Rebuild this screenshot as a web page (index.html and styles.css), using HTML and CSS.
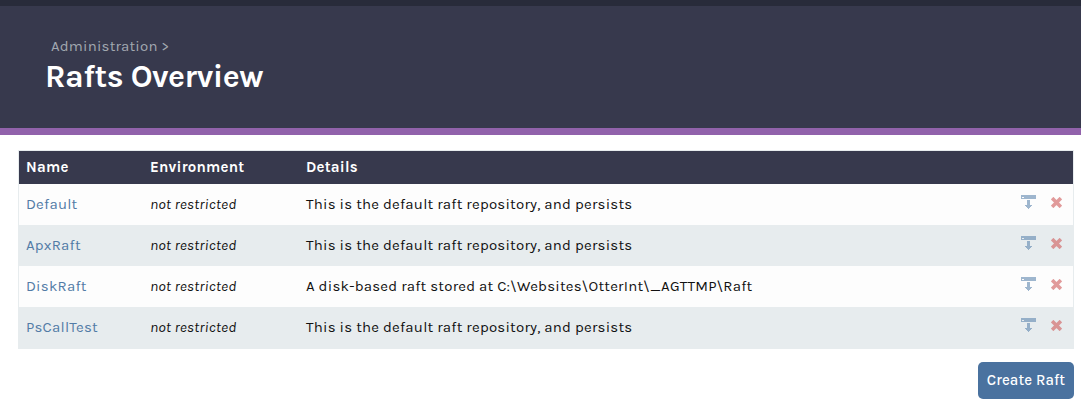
FILE: index.html
```html
<!DOCTYPE html>
<html lang="en">
<head>
<meta charset="utf-8">
<title>Rafts Overview</title>
<link rel="stylesheet" href="styles.css">
</head>
<body>
<svg class="symbols" aria-hidden="true">
  <symbol id="download" viewBox="0 0 15 14"><path fill="#6088af" fill-rule="evenodd" d="M0 0h15v4H0z M1 2v1h2V2z M6 5h3v5h2v1h-1v1H9v1H8v1H7v-1H6v-1H5v-1H4v-1h2z"/></symbol>
  <symbol id="remove" viewBox="0 0 11 11"><path stroke="#d05a5a" stroke-width="3.6" d="M1.1 1.1l8.8 8.8M9.9 1.1l-8.8 8.8"/></symbol>
</svg>
<header class="banner">
  <a class="crumb">Administration &gt;</a>
  <h1 class="title">Rafts Overview</h1>
</header>
<main class="content">
  <table class="rafts">
    <thead><tr><th class="name">Name</th><th class="env">Environment</th><th class="details">Details</th><th class="actions"></th></tr></thead>
    <tbody>
      <tr><td><a class="link">Default</a></td><td><i>not restricted</i></td><td>This is the default raft repository, and persists</td><td><div class="icons"><svg class="download"><use href="#download"/></svg><svg class="remove"><use href="#remove"/></svg></div></td></tr>
      <tr><td><a class="link">ApxRaft</a></td><td><i>not restricted</i></td><td>This is the default raft repository, and persists</td><td><div class="icons"><svg class="download"><use href="#download"/></svg><svg class="remove"><use href="#remove"/></svg></div></td></tr>
      <tr><td><a class="link">DiskRaft</a></td><td><i>not restricted</i></td><td>A disk-based raft stored at C:\Websites\OtterInt\_AGTTMP\Raft</td><td><div class="icons"><svg class="download"><use href="#download"/></svg><svg class="remove"><use href="#remove"/></svg></div></td></tr>
      <tr><td><a class="link">PsCallTest</a></td><td><i>not restricted</i></td><td>This is the default raft repository, and persists</td><td><div class="icons"><svg class="download"><use href="#download"/></svg><svg class="remove"><use href="#remove"/></svg></div></td></tr>
    </tbody>
  </table>
  <button class="create">Create Raft</button>
</main>
</body>
</html>
```
FILE: styles.css
```css
* { box-sizing: border-box; }
body { margin: 0; background: #fff; font-family: Karla, Roboto, sans-serif; font-size: 15px; color: #111; letter-spacing: 0.22px; }
.symbols { display: none; }
.banner { height: 135px; padding: 30px 45px 0; background: #37394d; border-top: 6px solid #282b3a; border-bottom: 7px solid #9162ab; }
.crumb { display: block; padding-left: 6px; line-height: 20px; color: #a2a8b0; letter-spacing: 0.18px; }
.title { margin: 2px 0 0; font-size: 32px; line-height: 38px; font-weight: 700; color: #fff; letter-spacing: -0.5px; white-space: nowrap; }
.content { display: flex; flex-direction: column; align-items: flex-end; padding: 15px 7px 0 18px; }
.rafts { width: 1056px; table-layout: fixed; border: 1px solid #e7ecee; border-collapse: separate; border-spacing: 0; }
th { height: 33px; padding: 0 0 1px 7px; background: #37394d; color: #fff; font-weight: 700; text-align: left; }
td { height: 41px; padding: 0 0 1px 7px; background: #fdfdfd; white-space: nowrap; }
tbody tr:nth-child(even) td { background: #e7ecee; }
.name { width: 124px; }
.env { width: 156px; }
.actions { width: 70px; }
i { letter-spacing: 0.15px; }
.link { color: #527ba6; }
.icons { display: flex; align-items: flex-start; gap: 15px; padding-left: 11px; margin-top: -4px; opacity: 0.6; }
.download { width: 15px; height: 14px; }
.remove { width: 11px; height: 11px; margin-top: 2px; }
.create { width: 96px; height: 37px; margin-top: 13px; padding: 0 0 1px; border: 0; border-radius: 5px; background: #4a729f; color: #fff; font: 500 15px Karla, Roboto, sans-serif; letter-spacing: 0.1px; }
```
